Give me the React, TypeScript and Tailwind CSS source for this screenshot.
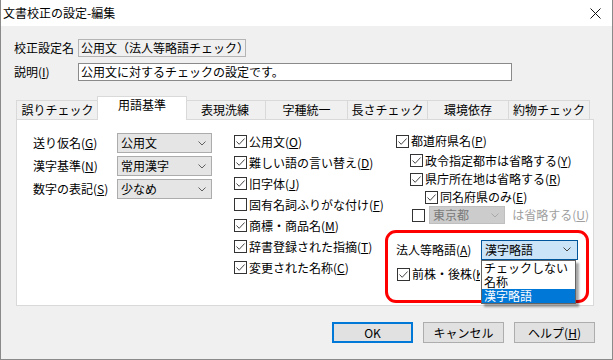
import React from 'react'

const font = "font-['Noto_Sans_CJK_JP','Noto_Sans_CJK_SC',sans-serif]"

const Chevron = ({ color = '#606060' }: { color?: string }) => (
  <svg width="8" height="5" viewBox="0 0 8 5" className="shrink-0">
    <path d="M0.5 0.5 L4 4 L7.5 0.5" fill="none" stroke={color} strokeWidth="1" />
  </svg>
)

const Check = ({ on }: { on: boolean }) => (
  <div className="w-[13px] h-[13px] shrink-0 border border-[#333] bg-white flex items-center justify-center">
    {on && (
      <svg width="11" height="11" viewBox="0 0 11 11">
        <path d="M1.5 5.5 L4.2 8.3 L9.6 2.5" fill="none" stroke="#444" strokeWidth="1" />
      </svg>
    )}
  </div>
)

const CheckRow = ({ on, label, k, cls = '', textCls = '' }: { on: boolean; label: string; k: string; cls?: string; textCls?: string }) => (
  <div className={`flex items-center gap-[2px] ${cls}`}>
    <Check on={on} />
    <span className={`leading-[14px] whitespace-nowrap ${textCls}`}>
      {label}(<u>{k}</u>)
    </span>
  </div>
)

const Select = ({ value }: { value: string }) => (
  <div className="w-[95px] h-[20px] bg-[#e5e5e5] border border-[#acacac] flex items-center justify-between pl-[3px] pr-[5px]">
    <span className="leading-[14px]">{value}</span>
    <Chevron />
  </div>
)

const tabs = [
  { t: '誤りチェック', w: 'w-[83px]' },
  { t: '用語基準', w: 'w-[84px]', active: true },
  { t: '表現洗練', w: 'w-[82px]' },
  { t: '字種統一', w: 'w-[83px]' },
  { t: '長さチェック', w: 'w-[81px]' },
  { t: '環境依存', w: 'w-[82px]' },
  { t: '約物チェック', w: 'w-[82px]' },
]

export default function App() {
  return (
    <div className={`w-[613px] h-[360px] bg-[#f0f0f0] text-[12px] text-black flex flex-col border-x border-b border-[#8a8a8a] ${font}`}>
      {/* title bar */}
      <div className="h-[26px] bg-white flex items-center justify-between pl-[2px] pr-[11px] shrink-0">
        <span className="text-[12px] leading-[16px]">文書校正の設定-編集</span>
        <svg width="11" height="11" viewBox="0 0 11 11">
          <path d="M0.5 0.5 L10.5 10.5 M10.5 0.5 L0.5 10.5" stroke="#111" strokeWidth="1" />
        </svg>
      </div>

      {/* fields */}
      <div className="flex flex-col gap-[6px] pt-[13px] pl-[13px]">
        <div className="flex items-center h-[18px]">
          <span className="w-[64px] leading-[14px]">校正設定名</span>
          <div className="w-[168px] h-[18px] border border-[#b4b4b4] bg-[#f0f0f0] pl-[2px] flex items-center">
            <span className="leading-[14px]">公用文（法人等略語チェック）</span>
          </div>
        </div>
        <div className="flex items-center h-[18px]">
          <span className="w-[64px] leading-[14px]">
            説明(<u>I</u>)
          </span>
          <div className="w-[434px] h-[18px] border border-[#8a8a8a] bg-white pl-[2px] flex items-center">
            <span className="leading-[14px]">公用文に対するチェックの設定です。</span>
          </div>
        </div>
      </div>

      {/* tabs */}
      <div className="pl-[15px] mt-[17px] flex flex-col">
        <div className="flex items-end h-[21px]">
          {tabs.map((tab) =>
            tab.active ? (
              <div
                key={tab.t}
                className={`${tab.w} -mx-[2px] h-[22px] -mb-[1px] relative z-10 bg-white border-x border-t border-[#d9d9d9] flex items-start justify-center pt-[1px] px-[2px] box-content`}
              >
                <span className="leading-[14px]">{tab.t}</span>
              </div>
            ) : (
              <div
                key={tab.t}
                className={`${tab.w} h-[19px] bg-[#f0f0f0] border-l border-t border-r border-[#d9d9d9] -ml-[1px] first:ml-0 flex items-center justify-center`}
              >
                <span className="leading-[14px]">{tab.t}</span>
              </div>
            )
          )}
        </div>

        {/* panel */}
        <div className="w-[578px] h-[187px] bg-white border border-[#d9d9d9] flex pt-[11px] pl-[16px]">
          {/* left column */}
          <div className="w-[179px] flex flex-col gap-[3px] mt-[2px]">
            {[
              ['送り仮名', 'G', '公用文'],
              ['漢字基準', 'N', '常用漢字'],
              ['数字の表記', 'S', '少なめ'],
            ].map(([l, k, v]) => (
              <div key={l} className="flex items-center h-[20px]">
                <span className="w-[84px] leading-[14px]">
                  {l}(<u>{k}</u>)
                </span>
                <Select value={v} />
              </div>
            ))}
          </div>

          {/* middle column */}
          <div className="ml-[22px] w-[151px] flex flex-col">
            {[
              [true, '公用文', 'O'],
              [true, '難しい語の言い替え', 'D'],
              [true, '旧字体', 'J'],
              [false, '固有名詞ふりがな付け', 'F'],
              [true, '商標・商品名', 'M'],
              [true, '辞書登録された指摘', 'T'],
              [true, '変更された名称', 'C'],
            ].map(([on, l, k]) => (
              <CheckRow key={l as string} on={on as boolean} label={l as string} k={k as string} cls="h-[21px]" />
            ))}
          </div>

          {/* right column */}
          <div className="w-[204px] flex flex-col">
            <CheckRow on label="都道府県名" k="P" cls="h-[20px] pl-[11px]" />
            <CheckRow on label="政令指定都市は省略する" k="Y" cls="h-[19px] pl-[25px]" />
            <CheckRow on label="県庁所在地は省略する" k="R" cls="h-[18px] pl-[25px]" />
            <CheckRow on label="同名府県のみ" k="E" cls="h-[18px] pl-[40px]" />
            <div className="flex items-center h-[18px] pl-[27px]">
              <Check on={false} />
              <div className="ml-[4px] w-[77px] h-[18px] bg-[#cccccc] border border-[#bfbfbf] flex items-center justify-between pl-[3px] pr-[5px]">
                <span className="leading-[14px] text-[#7a7a7a]">東京都</span>
                <Chevron color="#a8a8a8" />
              </div>
              <span className="ml-[7px] leading-[14px] text-[#a0a0a0] whitespace-nowrap">
                は省略する(<u>U</u>)
              </span>
            </div>

            {/* highlighted section */}
            <div className="mt-[6px] w-[204px] h-[73px] border-[3px] border-[#ff0000] rounded-[11px] pl-[8px] pt-[7px] flex flex-col">
              <div className="flex items-center h-[19px] relative z-20">
                <span className="w-[85px] leading-[14px]">
                  法人等略語(<u>A</u>)
                </span>
                <div className="relative">
                  <div className="w-[97px] h-[20px] bg-[#cce4f7] border border-[#005499] flex items-center justify-between pl-[3px] pr-[6px]">
                    <span className="leading-[14px]">漢字略語</span>
                    <Chevron color="#444" />
                  </div>
                  <div className="absolute left-0 top-full w-[95px] bg-white border border-[#646464] shadow-[3px_3px_2px_rgba(0,0,0,0.35)] flex flex-col">
                    <div className="h-[14px] pl-[2px] flex items-center">
                      <span className="leading-[14px] whitespace-nowrap">チェックしない</span>
                    </div>
                    <div className="h-[14px] pl-[2px] flex items-center">
                      <span className="leading-[14px] whitespace-nowrap">名称</span>
                    </div>
                    <div className="h-[14px] pl-[2px] flex items-center bg-[#0078d7] text-white">
                      <span className="leading-[14px] whitespace-nowrap">漢字略語</span>
                    </div>
                  </div>
                </div>
              </div>
              <CheckRow
                on
                label="前株・後株"
                k="K"
                cls="h-[20px] mt-[5px] pl-[1px]"
                textCls="max-w-[68px] overflow-hidden"
              />
            </div>
          </div>
        </div>
      </div>

      {/* buttons */}
      <div className="flex justify-end gap-[10px] pr-[17px] mt-[16px]">
        <div className="w-[81px] h-[21px] bg-[#e1e1e1] border-2 border-[#0078d7] flex items-center justify-center">
          <span className="leading-[14px]">OK</span>
        </div>
        <div className="w-[81px] h-[21px] bg-[#e1e1e1] border border-[#adadad] flex items-center justify-center">
          <span className="leading-[14px]">キャンセル</span>
        </div>
        <div className="w-[81px] h-[21px] bg-[#e1e1e1] border border-[#adadad] flex items-center justify-center">
          <span className="leading-[14px]">
            ヘルプ(<u>H</u>)
          </span>
        </div>
      </div>
    </div>
  )
}
